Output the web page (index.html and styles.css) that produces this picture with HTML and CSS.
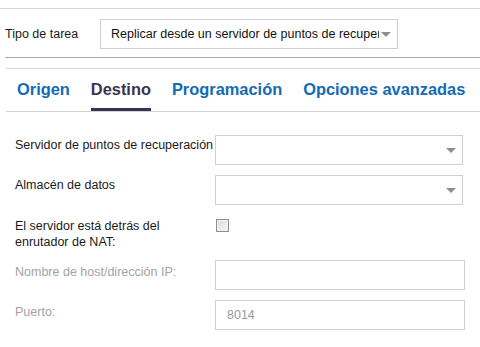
FILE: index.html
```html
<!DOCTYPE html>
<html lang="es">
<head>
<meta charset="utf-8">
<link rel="stylesheet" href="styles.css">
</head>
<body>
<div class="page">
  <div class="task-row">
    <span class="task-label">Tipo de tarea</span>
    <div class="select task-select">
      <span class="select-text">Replicar desde un servidor de puntos de recuperación</span>
      <span class="arrow"></span>
    </div>
  </div>
  <div class="panel">
    <nav class="tabs">
      <span class="tab">Origen</span>
      <span class="tab active">Destino</span>
      <span class="tab">Programación</span>
      <span class="tab">Opciones avanzadas</span>
    </nav>
    <div class="form">
      <label class="lbl nowrap">Servidor de puntos de recuperación</label>
      <div class="select field-select"><span class="select-text"></span><span class="arrow"></span></div>

      <label class="lbl">Almacén de datos</label>
      <div class="select field-select"><span class="select-text"></span><span class="arrow"></span></div>

      <label class="lbl lbl-check">El servidor está detrás del<br>enrutador de NAT:</label>
      <div class="check-cell"><span class="checkbox"></span></div>

      <label class="lbl disabled">Nombre de host/dirección IP:</label>
      <div class="input"></div>

      <label class="lbl disabled">Puerto:</label>
      <div class="input">8014</div>
    </div>
  </div>
</div>
</body>
</html>
```
FILE: styles.css
```css
* { box-sizing: border-box; }
html, body { margin: 0; padding: 0; background: #fff; }
body {
  font-family: "Liberation Sans", Arial, sans-serif;
  font-size: 12.5px;
  color: #1a1a1a;
  width: 480px;
  height: 347px;
  overflow: hidden;
}
.page {
  margin-top: 8px;
  border-top: 1px solid #d4d8dc;
}
.task-row {
  display: flex;
  align-items: center;
  margin-left: 5px;
  padding: 10px 0 8px;
  border-bottom: 1px solid #a9a9a9;
}
.task-label {
  width: 95px;
  color: #1a1a1a;
}
.select {
  display: flex;
  align-items: center;
  height: 30px;
  border: 1px solid #cfcfcf;
  background: #fff;
}
.task-select {
  width: 298px;
  padding-left: 10px;
  padding-right: 6px;
}
.select-text {
  flex: 1;
  white-space: nowrap;
  overflow: hidden;
  color: #111;
}
.arrow {
  width: 0;
  height: 0;
  border-left: 5px solid transparent;
  border-right: 5px solid transparent;
  border-top: 5px solid #8a8f96;
  margin-left: 2px;
}
.panel {
  margin-top: 10px;
  margin-left: 6px;
  border-top: 1px solid #d4d8dc;
}
.tabs {
  display: flex;
  gap: 21px;
  padding-left: 11px;
  border-bottom: 1px solid #d0d4d8;
  height: 43px;
  align-items: flex-end;
}
.tab {
  font-weight: bold;
  font-size: 16.4px;
  color: #136bb5;
  padding-bottom: 9px;
  border-bottom: 3px solid transparent;
  line-height: 20px;
}
.tab.active {
  color: #3a3350;
  border-bottom-color: #3a3350;
}
.form {
  display: grid;
  grid-template-columns: 200px 250px;
  row-gap: 10px;
  padding-left: 9px;
  margin-top: 23px;
}
.lbl {
  padding-top: 3px;
  line-height: 15px;
  color: #1a1a1a;
}
.nowrap { white-space: nowrap; }
.lbl.disabled { color: #a3a3a3; padding-top: 5px; }
.lbl-check { margin-top: 4px; padding-top: 0; line-height: 15.5px; }
.field-select {
  width: 248px;
  padding-right: 6px;
}
.check-cell {
  margin-top: 4px;
  height: 31px;
}
.checkbox {
  display: block;
  width: 13px;
  height: 13px;
  margin-left: 1px;
  border: 1px solid #8e8e8e;
  background: linear-gradient(135deg, #dcdde2, #f6f6f8);
  box-shadow: inset 0 0 0 1px #f2f2f4;
}
.input {
  height: 30px;
  border: 1px solid #cfcfcf;
  padding-left: 11px;
  line-height: 28px;
  color: #9a9a9a;
}
```
